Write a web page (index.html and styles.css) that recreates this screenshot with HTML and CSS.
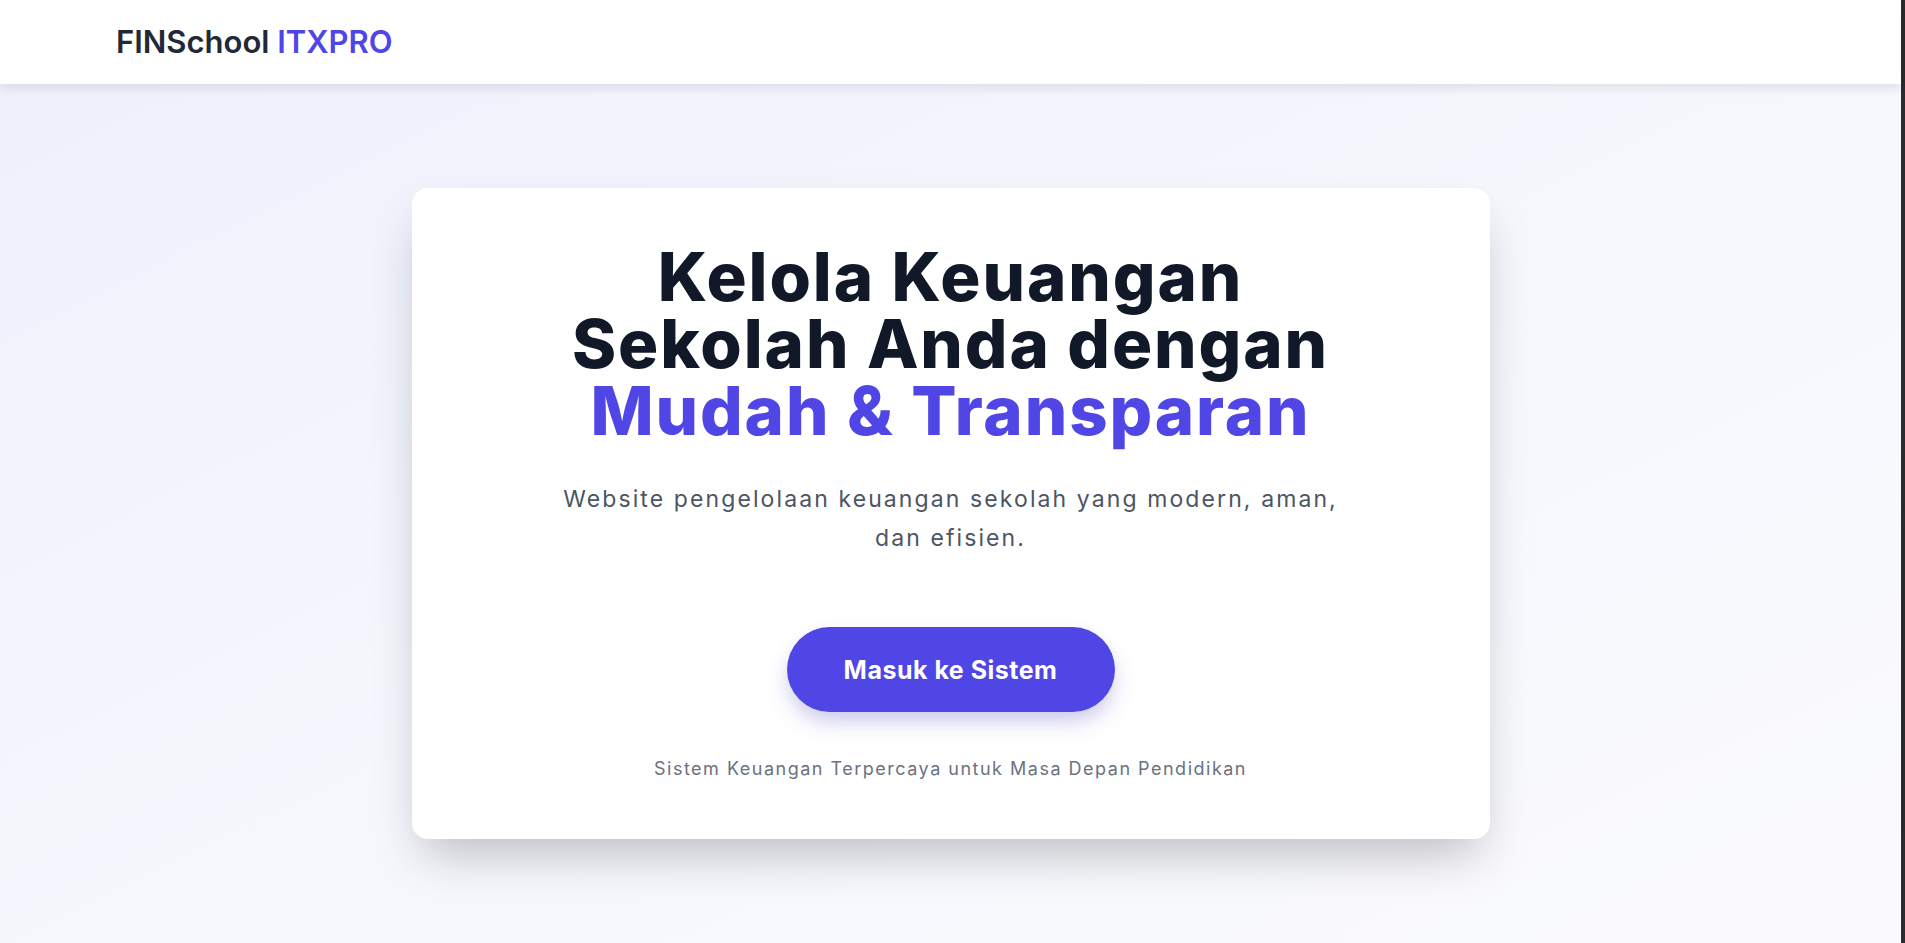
FILE: index.html
```html
<!DOCTYPE html>
<html lang="id">
<head>
<meta charset="utf-8">
<title>FINSchool ITXPRO</title>
<link rel="stylesheet" href="styles.css">
</head>
<body>
<div class="page">
  <div class="main">
    <header class="header">
      <div class="logo"><span class="logo-dark">FINSchool</span> <span class="logo-accent">ITXPRO</span></div>
    </header>
    <section class="hero">
      <div class="card">
        <h1 class="title">
          <span class="title-line">Kelola Keuangan</span>
          <span class="title-line">Sekolah Anda dengan</span>
          <span class="title-line accent">Mudah &amp; Transparan</span>
        </h1>
        <p class="subtitle">Website pengelolaan keuangan sekolah yang modern, aman,<br>dan efisien.</p>
        <a class="btn" href="#">Masuk ke Sistem</a>
        <p class="tagline">Sistem Keuangan Terpercaya untuk Masa Depan Pendidikan</p>
      </div>
    </section>
  </div>
  <div class="edge"></div>
</div>
</body>
</html>
```

FILE: styles.css
```css
* { box-sizing: border-box; }
html, body { margin: 0; padding: 0; height: 100%; }
body {
  font-family: Inter, "Noto Sans", sans-serif;
  color: #111827;
  overflow: hidden;
}
.page {
  display: flex;
  height: 943px;
}
.main {
  flex: 1;
  display: flex;
  flex-direction: column;
  background: linear-gradient(to bottom right, #edf0fc 0%, #f5f7fd 50%, #fbfbfd 100%);
}
.edge {
  width: 4px;
  background: #2b2b2b;
}
.header {
  height: 84px;
  background: #ffffff;
  box-shadow: 0 4px 10px rgba(15, 23, 42, 0.10);
  display: flex;
  align-items: center;
  padding-left: 116px;
  padding-bottom: 2px;
  position: relative;
  z-index: 2;
}
.logo {
  font-size: 31px;
  font-weight: 600;
  letter-spacing: 0;
}
.logo-dark { color: #1f2937; }
.logo-accent { color: #4f46e5; }
.hero {
  flex: 1;
  display: flex;
  align-items: center;
  justify-content: center;
}
.card {
  width: 1078px;
  height: 651px;
  background: #ffffff;
  border-radius: 16px;
  box-shadow: 0 25px 50px -12px rgba(0, 0, 0, 0.25);
  display: flex;
  flex-direction: column;
  align-items: center;
  padding-top: 55px;
}
.title {
  margin: 0;
  font-size: 67px;
  font-weight: 800;
  line-height: 67px;
  text-align: center;
  color: #111827;
  letter-spacing: 1.9px;
}
.title-line { display: block; }
.title .accent { color: #4f46e5; }
.subtitle {
  margin: 36px 0 0;
  font-size: 23px;
  line-height: 39px;
  color: #4b5563;
  text-align: center;
  letter-spacing: 2.1px;
}
.btn {
  margin-top: 69px;
  width: 328px;
  height: 85px;
  border-radius: 999px;
  background: #4f46e5;
  color: #ffffff;
  font-size: 25px;
  font-weight: 700;
  letter-spacing: 0.5px;
  text-decoration: none;
  display: flex;
  align-items: center;
  justify-content: center;
  box-shadow: 0 12px 24px -4px rgba(79, 70, 229, 0.25), 0 8px 16px rgba(0, 0, 0, 0.06);
}
.tagline {
  margin: 43px 0 0;
  font-size: 18px;
  line-height: 28px;
  color: #6b7280;
  text-align: center;
  letter-spacing: 1.5px;
}
```
